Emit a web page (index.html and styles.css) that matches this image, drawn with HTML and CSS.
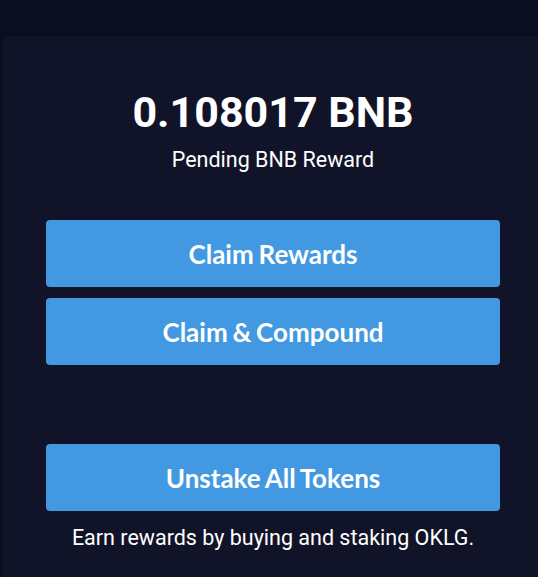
FILE: index.html
```html
<!DOCTYPE html>
<html lang="en">
<head>
<meta charset="utf-8">
<title>Pending BNB Reward</title>
<link rel="stylesheet" href="styles.css">
</head>
<body>
<main class="card">
  <h1 class="amount">0.108017 BNB</h1>
  <p class="label">Pending BNB Reward</p>
  <div class="actions">
    <button class="btn">Claim Rewards</button>
    <button class="btn">Claim &amp; Compound</button>
  </div>
  <div class="actions unstake">
    <button class="btn">Unstake All Tokens</button>
  </div>
  <p class="note">Earn rewards by buying and staking OKLG.</p>
</main>
</body>
</html>
```

FILE: styles.css
```css
html, body {
  margin: 0;
  padding: 0;
}
body {
  background: #0b0d20;
  overflow: hidden;
  height: 577px;
  font-family: Roboto, "Liberation Sans", sans-serif;
  color: #ffffff;
}
.card {
  box-sizing: border-box;
  margin: 36px 0 0 3px;
  width: 540px;
  min-height: 560px;
  padding: 51px 43px 0 43px;
  background: #111428;
  border-radius: 8px;
  display: flex;
  flex-direction: column;
  align-items: stretch;
  text-align: center;
}
.amount {
  margin: 0;
  font-size: 43px;
  line-height: 1.2;
  font-weight: 700;
}
.label {
  margin: 5px 0 0 0;
  font-size: 21.5px;
  line-height: 32px;
}
.actions {
  display: flex;
  flex-direction: column;
  gap: 11px;
  margin-top: 44px;
}
.unstake {
  margin-top: 79px;
}
.btn {
  height: 67px;
  border: 0;
  border-radius: 4px;
  background: #4299e1;
  color: #ffffff;
  font-family: Lato, "Liberation Sans", sans-serif;
  font-weight: 700;
  font-size: 26px;
  word-spacing: -1.5px;
  padding: 2px 0 0 0;
  display: flex;
  align-items: center;
  justify-content: center;
}
.note {
  margin: 11px 0 0 0;
  font-size: 21.5px;
  line-height: 32px;
}
```
